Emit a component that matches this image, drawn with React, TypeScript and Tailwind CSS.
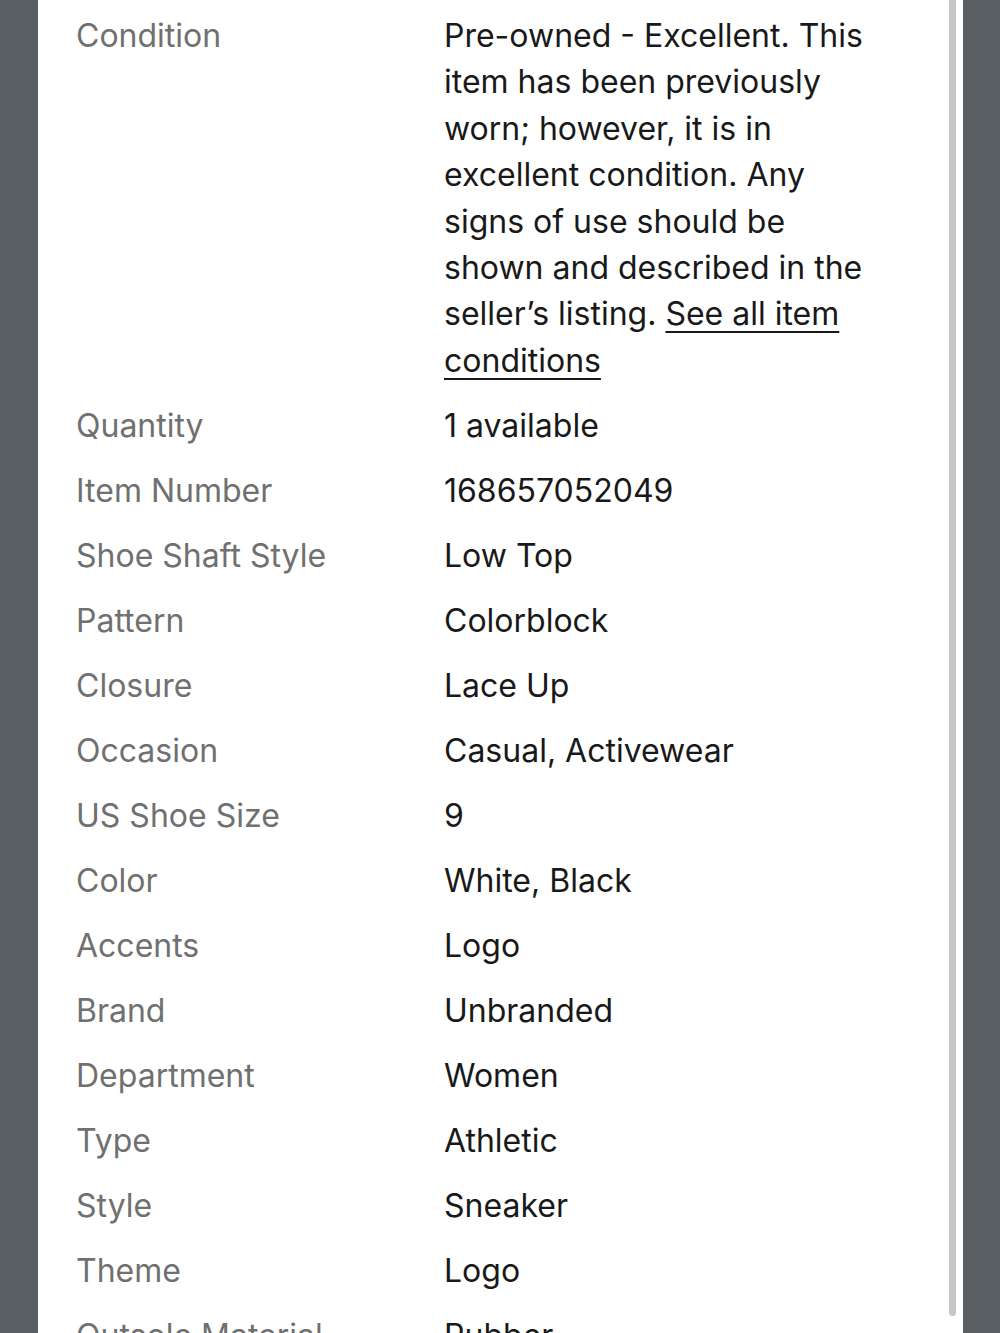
import React from 'react'

const specs: [string, string][] = [
  ['Quantity', '1 available'],
  ['Item Number', '168657052049'],
  ['Shoe Shaft Style', 'Low Top'],
  ['Pattern', 'Colorblock'],
  ['Closure', 'Lace Up'],
  ['Occasion', 'Casual, Activewear'],
  ['US Shoe Size', '9'],
  ['Color', 'White, Black'],
  ['Accents', 'Logo'],
  ['Brand', 'Unbranded'],
  ['Department', 'Women'],
  ['Type', 'Athletic'],
  ['Style', 'Sneaker'],
  ['Theme', 'Logo'],
  ['Outsole Material', 'Rubber'],
]

function SpecRow({ label, children, tall }: { label: string; children: React.ReactNode; tall?: boolean }) {
  return (
    <div className="grid grid-cols-[368px_435px] py-[9.5px]">
      <div className="text-[#707070]">{label}</div>
      <div className={tall ? 'text-[#191919] leading-[46.4px]' : 'text-[#191919]'}>{children}</div>
    </div>
  )
}

export default function App() {
  return (
    <div className="h-[1333px] overflow-hidden bg-[#5a5f63] flex">
      <div className="w-[38px] shrink-0" />
      <div className="w-[925px] bg-white flex">
        <div
          className="flex-1 pl-[38px] pt-[3.5px] text-[32px] leading-[46px]"
          style={{ fontFamily: 'Inter, "Open Sans", sans-serif' }}
        >
          <SpecRow label="Condition" tall>
            Pre-owned - Excellent. This item has been previously worn; however, it is in excellent
            condition. Any signs of use should be shown and described in the seller’s listing.{' '}
            <a href="#" className="underline underline-offset-[6px] decoration-2">
              See all item conditions
            </a>
          </SpecRow>
          {specs.map(([label, value]) => (
            <SpecRow key={label} label={label}>
              {value}
            </SpecRow>
          ))}
        </div>
        <div className="w-[14px] shrink-0 flex justify-start">
          <div className="w-[7px] h-[1316px] bg-[#c6c6c6] rounded-b-full" />
        </div>
      </div>
    </div>
  )
}
